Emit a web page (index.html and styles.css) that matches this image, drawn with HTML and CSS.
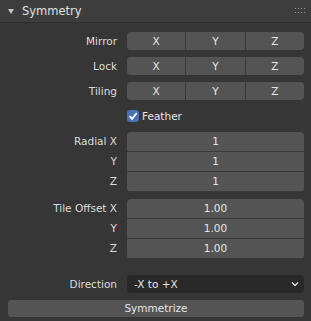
FILE: index.html
```html
<!DOCTYPE html>
<html lang="en">
<head>
    <meta charset="UTF-8">
    <title>Symmetry</title>
    <link rel="stylesheet" href="styles.css">
</head>
<body>
<div class="panel">
    <div class="header">
        <span class="arrow"></span>
        <span class="title">Symmetry</span>
        <svg class="grip" width="10" height="6" viewBox="0 0 10 6">
            <g fill="#9a9a9a">
                <rect x="0" y="0" width="1" height="1"/><rect x="3" y="0" width="1" height="1"/>
                <rect x="6" y="0" width="1" height="1"/><rect x="9" y="0" width="1" height="1"/>
                <rect x="0" y="4" width="1" height="1"/><rect x="3" y="4" width="1" height="1"/>
                <rect x="6" y="4" width="1" height="1"/><rect x="9" y="4" width="1" height="1"/>
            </g>
        </svg>
    </div>
    <div class="body">
        <div class="row">
            <div class="label">Mirror</div>
            <div class="toggles"><div class="btn">X</div><div class="btn">Y</div><div class="btn">Z</div></div>
        </div>
        <div class="row">
            <div class="label">Lock</div>
            <div class="toggles"><div class="btn">X</div><div class="btn">Y</div><div class="btn">Z</div></div>
        </div>
        <div class="row">
            <div class="label">Tiling</div>
            <div class="toggles"><div class="btn">X</div><div class="btn">Y</div><div class="btn">Z</div></div>
        </div>
        <div class="row check-row">
            <div class="label"></div>
            <div class="check">
                <span class="box">
                    <svg width="12" height="12" viewBox="0 0 12 12"><path d="M2.5 6.2 L5 8.8 L9.8 3" fill="none" stroke="#fff" stroke-width="1.8"/></svg>
                </span>
                Feather
            </div>
        </div>

        <div class="group">
            <div class="labels">
                <div class="label">Radial X</div>
                <div class="label">Y</div>
                <div class="label">Z</div>
            </div>
            <div class="fields">
                <div class="field">1</div>
                <div class="field">1</div>
                <div class="field">1</div>
            </div>
        </div>

        <div class="group">
            <div class="labels">
                <div class="label">Tile Offset X</div>
                <div class="label">Y</div>
                <div class="label">Z</div>
            </div>
            <div class="fields">
                <div class="field">1.00</div>
                <div class="field">1.00</div>
                <div class="field">1.00</div>
            </div>
        </div>

        <div class="row dir-row">
            <div class="label">Direction</div>
            <div class="select">
                <span>-X to +X</span>
                <svg width="8" height="6" viewBox="0 0 8 6"><path d="M1 1.5 L4 4.5 L7 1.5" fill="none" stroke="#ddd" stroke-width="1.4"/></svg>
            </div>
        </div>
        <div class="action">Symmetrize</div>
    </div>
</div>
</body>
</html>
```

FILE: styles.css
```css
body {
    margin: 0;
    background-color: #363636;
    font-family: "DejaVu Sans", sans-serif;
    font-size: 10.5px;
    color: #e6e6e6;
}

.panel {
    width: 311px;
    height: 321px;
}

.header {
    display: flex;
    align-items: center;
    height: 23px;
    background-color: #3d3d3d;
    border-bottom: 1px solid #2f2f2f;
    box-sizing: border-box;
}

.arrow {
    width: 0;
    height: 0;
    margin-left: 8px;
    margin-right: 8px;
    border-left: 3.5px solid transparent;
    border-right: 3.5px solid transparent;
    border-top: 5px solid #c4c4c4;
}

.title {
    flex: 1;
    font-size: 11.5px;
    color: #e0e0e0;
}

.grip {
    margin-right: 6px;
}

.body {
    padding: 9px 7px 0 8px;
}

.row {
    display: flex;
    align-items: center;
    height: 18px;
    margin-bottom: 7px;
}

.label {
    width: 109px;
    padding-right: 10px;
    text-align: right;
    color: #dcdcdc;
}

.toggles {
    flex: 1;
    display: flex;
    height: 18px;
    gap: 1px;
    background-color: #3a3a3a;
    border-radius: 4px;
    overflow: hidden;
}

.btn {
    flex: 1;
    display: flex;
    align-items: center;
    justify-content: center;
    background-color: #545454;
}

.check-row {
    height: 18px;
}

.check {
    display: flex;
    align-items: center;
    gap: 3px;
}

.box {
    display: flex;
    width: 12px;
    height: 12px;
    border-radius: 3px;
    background-color: #4772b3;
}

.group {
    display: flex;
    margin-top: 7px;
    margin-bottom: 6px;
}

.labels .label {
    height: 19px;
    line-height: 19px;
    margin-bottom: 1px;
}

.fields {
    flex: 1;
    display: flex;
    flex-direction: column;
    gap: 1px;
    background-color: #3a3a3a;
    border-radius: 4px;
    overflow: hidden;
}

.field {
    height: 19px;
    line-height: 19px;
    text-align: center;
    background-color: #545454;
}

.dir-row {
    margin-top: 16px;
    margin-bottom: 7px;
}

.select {
    flex: 1;
    display: flex;
    align-items: center;
    justify-content: space-between;
    height: 18px;
    padding: 0 5px 0 7px;
    background-color: #282828;
    border-radius: 4px;
}

.action {
    height: 17px;
    line-height: 17px;
    text-align: center;
    background-color: #545454;
    border-radius: 3px;
}
```
